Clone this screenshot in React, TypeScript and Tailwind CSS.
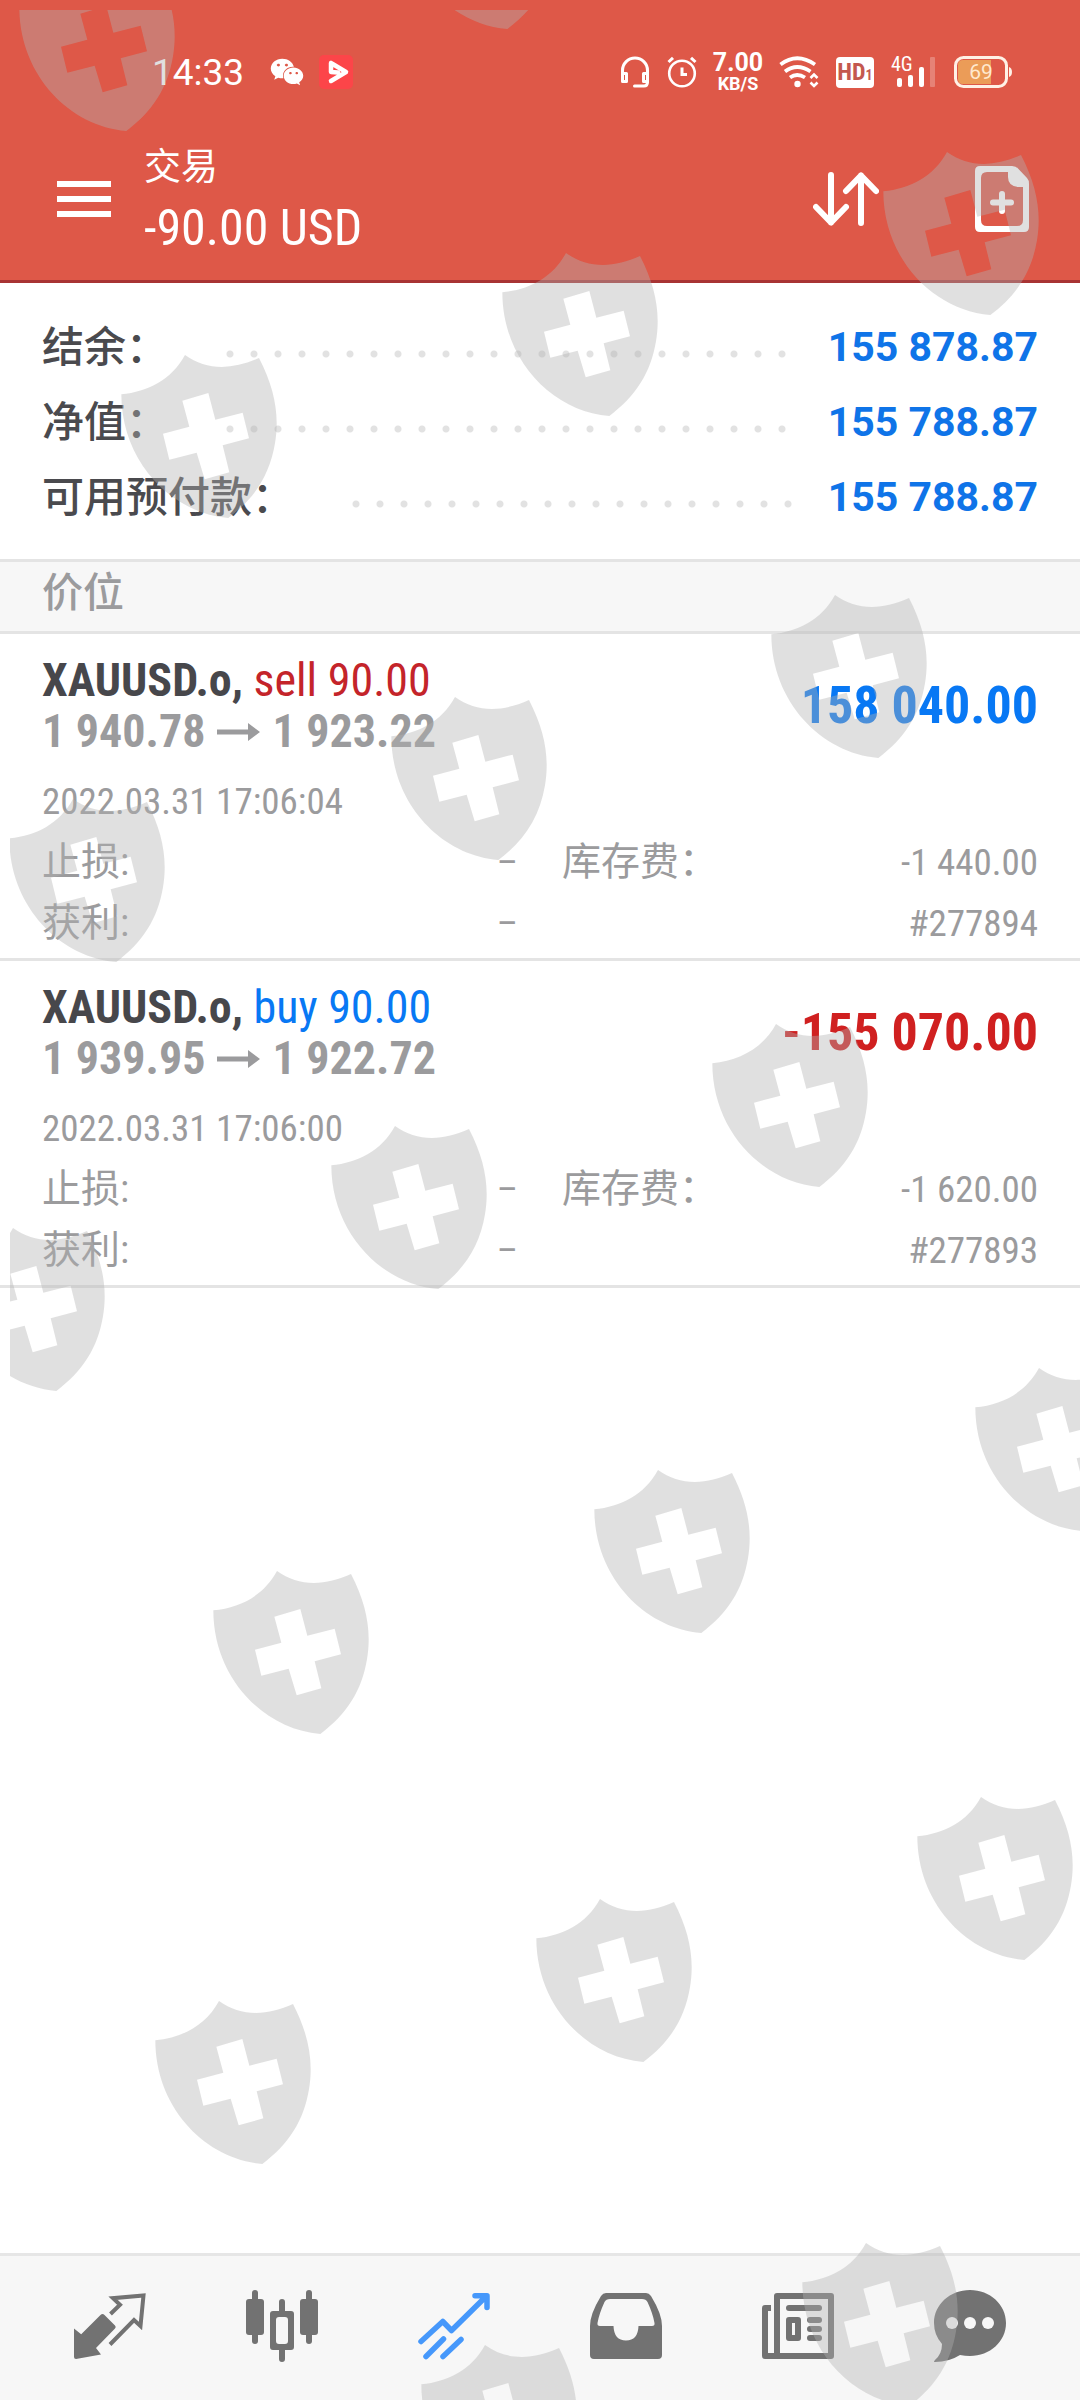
import { FaWeixin } from "react-icons/fa";

const summary = [
    { label: "结余：", value: "155 878.87" },
    { label: "净值：", value: "155 788.87" },
    { label: "可用预付款：", value: "155 788.87" },
];

const positions = [
    {
        id: "#277894", symbol: "XAUUSD.o,", side: "sell", volume: "90.00", open: "1 940.78", current: "1 923.22",
        profit: "158 040.00", time: "2022.03.31 17:06:04", swap: "-1 440.00",
    },
    {
        id: "#277893", symbol: "XAUUSD.o,", side: "buy", volume: "90.00", open: "1 939.95", current: "1 922.72",
        profit: "-155 070.00", time: "2022.03.31 17:06:00", swap: "-1 620.00",
    },
];

// top left corner of every shield, measured inside the watermark layer
const shields = [
    [9, -42], [390, -144],
    [111, 345], [492, 243], [873, 142],
    [-1, 789], [381, 687], [761, 585],
    [-61, 1218], [321, 1116], [702, 1014],
    [203, 1561], [584, 1460], [965, 1358],
    [145, 1991], [526, 1889], [907, 1787],
    [411, 2335], [792, 2233],
];

function Watermark() {
    return (
        <div className="absolute top-[10px] left-[10px] right-0 bottom-0 overflow-hidden pointer-events-none" aria-hidden="true">
            {shields.map(([left, top]) => (
                <svg key={`${left}-${top}`} className="absolute w-[156px] h-[163px]" style={{ left, top }} viewBox="0 0 466 489">
                    <path
                        fill="#b2b2b2" fillOpacity="0.4" fillRule="evenodd"
                        d="M0 118C80 110 150 75 191 0C255 47 335 45 413 9C460 100 475 180 461 265C445 360 400 430 321 489C150 475 0 320 0 118ZM183 137L204 215L125 236L144 314L226 293L250 373L324 352L304 271L383 250L364 173L282 194L261 114Z"
                    />
                </svg>
            ))}
        </div>
    );
}

function StatusBar() {
    return (
        <div className="flex items-center h-[144px] pl-[152px] pr-[68px] text-white font-['Roboto',sans-serif]">
            <span className="text-[37px] leading-none">14:33</span>
            <FaWeixin className="ml-[26px] w-[34px] h-[34px]" />
            <svg className="ml-[15px] w-[34px] h-[34px]" viewBox="0 0 34 34">
                <rect width="34" height="34" rx="5" fill="#fc4549" />
                <path d="M12 8L27 17L12 26M12 8V17L19 17.500" fill="none" stroke="#fff" strokeWidth="4.500" strokeLinejoin="round" strokeLinecap="round" />
            </svg>
            <div className="ml-auto flex items-center gap-[17px]">
                <svg className="w-[30px] h-[32px]" viewBox="0 0 30 32" fill="none" stroke="currentColor" strokeWidth="3">
                    <path d="M2.5 17V14.500A12.500 12.500 0 0 1 27.500 14.500V26Q27.500 30 24 30H14.500" strokeLinecap="round" />
                    <path d="M2.500 17.500H6.500V25.500H2.500ZM27.500 17.500H23.500V25.500H27.500Z" strokeLinejoin="round" />
                </svg>
                <svg className="w-[30px] h-[32px]" viewBox="0 0 30 32" fill="none" stroke="currentColor" strokeWidth="3">
                    <circle cx="15" cy="17.500" r="12.800" strokeWidth="2.600" />
                    <path d="M1.500 6L6 1.800M28.500 6L24 1.800M15 11.500V18.500H20" />
                </svg>
                <div className="w-12 flex flex-col items-center font-bold">
                    <span className="text-[25px] leading-[24px]">7.00</span>
                    <span className="text-[18px] leading-[18px]">KB/S</span>
                </div>
                <svg className="w-[40px] h-[32px]" viewBox="0 0 40 32" fill="none" stroke="currentColor">
                    <path d="M1.500 8.500Q18 -4 36 8.500M6 15.500Q18 6.500 31.500 15.500M11 21.500Q18 16.500 26 21.500" strokeWidth="3.800" />
                    <circle cx="18.500" cy="28" r="3.200" fill="currentColor" stroke="none" />
                    <path d="M31.500 22L35 18.500L38.500 22M31.500 26.500L35 30L38.500 26.500" strokeWidth="2.600" />
                </svg>
                <div className="w-[38px] h-[31px] rounded-[4px] bg-white text-[#c4584e] flex items-baseline justify-center font-bold font-['Roboto_Condensed',sans-serif]">
                    <span className="text-[24px] leading-[31px]">HD</span>
                    <span className="text-[14px]">1</span>
                </div>
                <div className="relative w-[46px] h-[32px]">
                    <span className="absolute left-0 top-0 text-[20px] leading-[16px] font-['Roboto_Condensed',sans-serif]">4G</span>
                    <svg className="w-[46px] h-[32px]" viewBox="0 0 46 32" fill="currentColor">
                        <rect x="6" y="22" width="5" height="9" rx="2" />
                        <rect x="17" y="19" width="5" height="12" rx="2" />
                        <rect x="28" y="11" width="5" height="20" rx="2" />
                        <rect x="39" y="1" width="5" height="30" rx="1" fillOpacity="0.25" />
                    </svg>
                </div>
                <div className="relative w-[58px] h-[32px]">
                    <svg className="w-[58px] h-[32px]" viewBox="0 0 58 32">
                        <path d="M9 4H37V28H9Q4 28 4 23V9Q4 4 9 4Z" fill="#eb9c58" />
                        <rect x="1.500" y="1.500" width="51" height="29" rx="8" fill="none" stroke="#fff1e6" strokeWidth="3" />
                        <path d="M55 11Q58 12 58 16T55 21Z" fill="#fff1e6" />
                    </svg>
                    <span className="absolute inset-0 pr-1 flex items-center justify-center text-[21px] leading-none text-[#ffe9cf]">69</span>
                </div>
            </div>
        </div>
    );
}

function Header() {
    return (
        <header className="bg-[#de5848] border-b-[3px] border-[#a83434] pb-[26px] text-white">
            <StatusBar />
            <div className="flex items-center h-[110px] pl-[57px] pr-[51px]">
                <button type="button" aria-label="菜单" className="flex flex-col gap-[9px] w-[54px]">
                    <span className="h-[6px] w-full bg-white" />
                    <span className="h-[6px] w-full bg-white" />
                    <span className="h-[6px] w-full bg-white" />
                </button>
                <h1 className="ml-[33px] pt-[10px] flex flex-col">
                    <span className="text-[37px] leading-[48px]">交易</span>
                    <span className="text-[50px] leading-[72px]">-90.00 USD</span>
                </h1>
                <button type="button" aria-label="排序" className="ml-auto">
                    <svg className="w-[66px] h-[54px]" viewBox="0 0 66 54" fill="none" stroke="currentColor" strokeWidth="6" strokeLinecap="round" strokeLinejoin="round">
                        <path d="M18 3V50.500M3 35L18 50.500L33 35M48 51V3.500M33 19L48 3.500L63 19" />
                    </svg>
                </button>
                <button type="button" aria-label="新订单" className="ml-24">
                    <svg className="w-[54px] h-[66px]" viewBox="0 0 54 66">
                        <path
                            fill="currentColor" fillRule="evenodd"
                            d="M5 0H37Q41 0 43 2.500L52 12Q54 14 54 18V61Q54 66 49 66H5Q0 66 0 61V5Q0 0 5 0ZM12 6Q6 6 6 12V54Q6 60 12 60H42Q48 60 48 54V21H43Q33 20 33 11V6Z"
                        />
                        <path d="M27 28V45M18 36.500H36" stroke="currentColor" strokeWidth="6" strokeLinecap="round" />
                    </svg>
                </button>
            </div>
        </header>
    );
}

function Position({ item }: { item: (typeof positions)[number] }) {
    const profitColor = item.profit.startsWith("-") ? "text-[#d02020]" : "text-[#0878f4]";
    const sideColor = item.side === "sell" ? "text-[#c4242a]" : "text-[#0878f4]";

    return (
        <li className="px-[42px] pt-[21px] pb-1 border-b-[3px] border-[#e4e4e4] text-[#9b9b9d]">
            <div className="flex items-center justify-between">
                <div className="text-[46px] leading-[51px]">
                    <p>
                        <b className="text-[#47474b]">{item.symbol}</b> <span className={sideColor}>{item.side} {item.volume}</span>
                    </p>
                    <p className="flex items-center gap-3 font-bold">
                        <span>{item.open}</span>
                        <svg className="w-[43px] h-[18px]" viewBox="0 0 43 18" fill="currentColor">
                            <path d="M0 6.500H31V0L43 9L31 18V11.500H0Z" />
                        </svg>
                        <span>{item.current}</span>
                    </p>
                </div>
                <strong className={`text-[52px] leading-none ${profitColor}`}>{item.profit}</strong>
            </div>
            <div className="mt-[14px] text-[37px] leading-[61px]">
                <p>{item.time}</p>
                <dl className="grid grid-cols-2 gap-x-[44px]">
                    <div className="flex justify-between">
                        <dt className="text-[39px]">止损:</dt>
                        <dd>–</dd>
                    </div>
                    <div className="flex justify-between">
                        <dt className="text-[39px]">库存费：</dt>
                        <dd>{item.swap}</dd>
                    </div>
                    <div className="flex justify-between">
                        <dt className="text-[39px]">获利:</dt>
                        <dd>–</dd>
                    </div>
                    <dd className="text-right">{item.id}</dd>
                </dl>
            </div>
        </li>
    );
}

function BottomNav() {
    return (
        <nav className="grid grid-cols-6 justify-items-center px-6 pt-[34px] pb-[38px] bg-[#f7f7f7] border-t-[3px] border-[#e6e6e6] text-[#727272]">
            <a href="#quotes" aria-label="行情">
                <svg className="w-[72px] h-[72px]" viewBox="0 0 72 72">
                    <path d="M0 38.500L7.200 44.300L26.500 25Q28.500 23 30.500 25L41 35.500Q42.500 37 41 38.500L22 58L27 64.500L2 69Q0 69 0 67Z" fill="currentColor" />
                    <path d="M36.500 24L46 14.800L39 8.200L69.500 5.500L66.500 36L60 30L36 54.500" fill="none" stroke="currentColor" strokeWidth="4" />
                </svg>
            </a>
            <a href="#charts" aria-label="图表">
                <svg className="w-[72px] h-[72px]" viewBox="0 0 72 72" fill="currentColor">
                    <rect x="6" width="6" height="54" rx="3" />
                    <rect y="9" width="18" height="36" rx="3" />
                    <rect x="60" width="6" height="54" rx="3" />
                    <rect x="54" y="9" width="18" height="36" rx="3" />
                    <path d="M33 21V12Q33 9 36 9T39 12V21H45Q48 21 48 24V57Q48 60 45 60H39V69Q39 72 36 72T33 69V60H27Q24 60 24 57V24Q24 21 27 21ZM33 27Q30 27 30 30V51Q30 54 33 54H39Q42 54 42 51V30Q42 27 39 27Z" fillRule="evenodd" />
                </svg>
            </a>
            <a href="#trade" aria-label="交易" aria-current="page" className="text-[#4698fb]">
                <svg className="w-[72px] h-[72px]" viewBox="0 0 72 72" fill="none" stroke="currentColor" strokeWidth="5.500" strokeLinecap="round" strokeLinejoin="round">
                    <path d="M3 51.500L24.800 31.500L33.500 40.500L68 6.500M57 5.700H69V17.500M8 66.500L25.500 49M25 66.500L43 49.500" />
                </svg>
            </a>
            <a href="#history" aria-label="历史">
                <svg className="w-[72px] h-[72px]" viewBox="0 0 72 72" fill="currentColor">
                    <path
                        fillRule="evenodd"
                        d="M16 3H56Q59 3 61 6Q72 24 72 36V65Q72 69 68 69H4Q0 69 0 65V36Q0 24 11 6Q13 3 16 3ZM20 9Q16 9 14.500 12Q9 24 7.500 33Q7 36 10 36H23.500Q24 50.500 36 50.500T48.500 36H62Q65 36 64.500 33Q63 24 57.500 12Q56 9 52 9Z"
                    />
                </svg>
            </a>
            <a href="#news" aria-label="新闻">
                <svg className="w-[72px] h-[72px]" viewBox="0 0 72 72" fill="currentColor">
                    <path
                        fillRule="evenodd"
                        d="M15 3H69Q72 3 72 6V66Q72 69 69 69H3Q0 69 0 66V18Q0 15 3 15H9V21H6V63H12V6Q12 3 15 3ZM18 9V63H66V9Z"
                    />
                    <rect x="24" y="15" width="36" height="6" rx="3" />
                    <path d="M27 27H36Q39 27 39 30V48Q39 51 36 51H27Q24 51 24 48V30Q24 27 27 27ZM30 33V45H33V33Z" fillRule="evenodd" />
                    <rect x="45" y="27" width="15" height="6" rx="3" />
                    <rect x="45" y="36" width="15" height="6" rx="3" />
                    <rect x="45" y="45" width="15" height="6" rx="3" />
                </svg>
            </a>
            <a href="#chat" aria-label="聊天">
                <svg className="w-[72px] h-[72px]" viewBox="0 0 72 72">
                    <path d="M36 0C56 0 72 14.500 72 33S56 66 36 66Q31 66 26 65Q15 72 1 72Q-1 72 1 70Q8 64 8 54Q0 45 0 33C0 14.500 16 0 36 0Z" fill="currentColor" />
                    <circle cx="18" cy="33" r="6" fill="#f7f7f7" />
                    <circle cx="36" cy="33" r="6" fill="#f7f7f7" />
                    <circle cx="54" cy="33" r="6" fill="#f7f7f7" />
                </svg>
            </a>
        </nav>
    );
}

export default function App() {
    return (
        <div className="relative min-h-screen flex flex-col overflow-hidden bg-white font-['Roboto_Condensed','Liberation_Sans_Narrow','Noto_Sans_CJK_SC',sans-serif]">
            <Header />
            <main className="flex-1">
                <dl className="px-[42px] pt-[27px] pb-6 text-[42px] leading-[75px]">
                    {summary.map((row) => (
                        <div key={row.label} className="flex items-center">
                            <dt className="font-medium text-[#4a4a4e]">{row.label}</dt>
                            <dd className="flex-1 flex items-center font-bold text-[41px] text-[#0f74e8] font-['Roboto',sans-serif]">
                                <span className="flex-1 h-6 mt-3 ml-[50px] mr-7 bg-[radial-gradient(circle,#e2e2e2_3px,transparent_4px)] bg-[size:24px_24px]" />
                                <span>{row.value}</span>
                            </dd>
                        </div>
                    ))}
                </dl>
                <h2 className="px-[42px] pb-[7px] bg-[#f7f7f7] border-y-[3px] border-[#e4e4e4] text-[41px] leading-[62px] font-medium text-[#9b9b9d]">价位</h2>
                <ul>
                    {positions.map((item) => (
                        <Position key={item.id} item={item} />
                    ))}
                </ul>
            </main>
            <BottomNav />
            <Watermark />
        </div>
    );
}
